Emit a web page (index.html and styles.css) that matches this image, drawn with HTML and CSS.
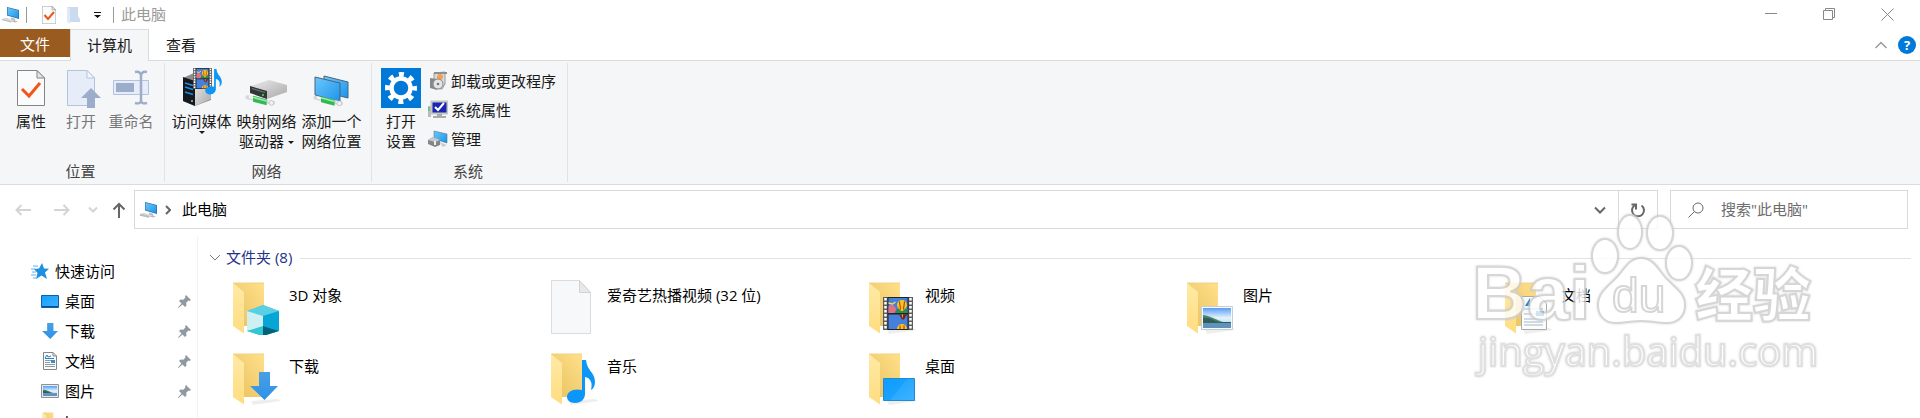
FILE: index.html
```html
<!DOCTYPE html>
<html lang="zh-CN">
  <head>
    <meta charset="UTF-8" />
    <meta name="viewport" content="width=device-width, initial-scale=1" />
    <title>此电脑</title>
    <link rel="stylesheet" href="styles.css">
  </head>
  <body>
    <!-- Shared icons -->
    <svg class="defs" width="0" height="0" aria-hidden="true">
      <defs>
        <linearGradient id="gBack" x1="0" y1="1" x2="1" y2="0">
          <stop offset="0" stop-color="#e8c05e" />
          <stop offset="1" stop-color="#ffe08a" />
        </linearGradient>
        <linearGradient id="gFront" x1="0" y1="0" x2="0" y2="1">
          <stop offset="0" stop-color="#ffeaa6" />
          <stop offset="1" stop-color="#ffdc80" />
        </linearGradient>
        <linearGradient id="gBlue" x1="0" y1="0" x2="1" y2="1">
          <stop offset="0" stop-color="#14a0ff" />
          <stop offset="1" stop-color="#3fb2ff" />
        </linearGradient>
        <linearGradient id="gScreen" x1="0" y1="0" x2="1" y2="1">
          <stop offset="0" stop-color="#6cc8fb" />
          <stop offset="1" stop-color="#1c93ea" />
        </linearGradient>
        <linearGradient id="gArrow" x1="0" y1="0" x2="0" y2="1">
          <stop offset="0" stop-color="#4a9fe6" />
          <stop offset="1" stop-color="#2b92e8" />
        </linearGradient>
        <linearGradient id="gSky" x1="0" y1="0" x2="0" y2="1">
          <stop offset="0" stop-color="#5b9cf5" />
          <stop offset="0.5" stop-color="#e4f4fd" />
          <stop offset="1" stop-color="#9cc8e4" />
        </linearGradient>
        <linearGradient id="gMetal" x1="0" y1="0" x2="1" y2="1">
          <stop offset="0" stop-color="#ececec" />
          <stop offset="1" stop-color="#a9a9a9" />
        </linearGradient>
      </defs>
      <symbol id="folder" viewBox="0 0 52 56">
        <path d="M22 55L50 51 46 49 20 51z" fill="#eee" />
        <path d="M2 4h31v43H2z" fill="url(#gBack)" />
        <path d="M2 4h31" stroke="#f0d282" />
        <path d="M13 47h20v3l-18 1z" fill="#fff" opacity="0.6" />
        <path d="M2 4l11 9v41.500L2 47z" fill="url(#gFront)" />
      </symbol>
      <symbol id="pc" viewBox="0 0 20 18">
        <path d="M7 1l12 3v9L7 9.500z" fill="#2c6f9e" />
        <path d="M7.600 1.800L18.400 4.500v7.600L7.600 9z" fill="url(#gScreen)" />
        <path d="M11 11.500l4 1.200v1.800l3 .8-3 1.200-5-1.500 1-.8z" fill="#b8bcc0" />
        <path d="M1 13.500l4.500-1.800 9 2.600-3.500 2.200z" fill="#d5dade" />
        <path d="M2 13.700l9 2.200" stroke="#b6bcc2" />
      </symbol>
      <symbol id="net" viewBox="0 0 40 14">
        <path d="M3 3l32 7" stroke="#d4d8d8" stroke-width="5" stroke-linecap="round" />
        <path d="M5 2.500l6 1.300M29 8l5 1" stroke="#f6f6f6" stroke-width="2.500" />
        <path d="M10 1l17 4.500v7.500L10 8.500z" fill="#34b856" />
        <path d="M10 3l17 4.500" stroke="#9aecaa" stroke-width="2" />
        <circle cx="33" cy="10" r="3" fill="#f2f2f2" stroke="#aaa" stroke-width="0.700" />
      </symbol>
      <symbol id="film" viewBox="0 0 30 33">
        <path d="M0 0h30v33H0z" fill="#5c5c5c" />
        <path d="M2.500 1v32M27.500 1v32" stroke="#fff" stroke-width="2.500" stroke-dasharray="2.500 1.500" />
        <path d="M4.500 0h21v33h-21z" fill="#222" />
        <path d="M5.500 1h19v15h-19zM5.500 17.500h19V32h-19z" fill="#4480dc" />
        <path d="M5.500 12h19v4h-19z" fill="#2c8c4c" />
        <path d="M5.500 9l4-2 4 5-2 4h-6z" fill="#e2708a" />
        <path d="M5.500 6l4 1 3-2" stroke="#f5d95c" stroke-width="1.500" fill="none" />
        <path d="M14 8a5 5 0 0110 0c0 3-3 4-4 6h-2c-1-2-4-3-4-6z" fill="#f4c51d" />
        <path d="M16.500 4.500l1 8M21.500 4.500l-1 8" stroke="#c8201c" />
        <path d="M16 17.500h8l-3 5h-2z" fill="#7c2020" />
        <path d="M18.500 17.500h1.500v4z" fill="#e8c020" />
        <path d="M14 32a5 5 0 0110 0z" fill="#f4c51d" />
        <path d="M17 28.500V32M21 28.500V32" stroke="#c8201c" />
      </symbol>
      <symbol id="note" viewBox="0 0 28 44">
        <path d="M15 0h4c1 11 9 12 9 22 0 4-2 7-4 8 2-8-1-12-6-13v17c0 5-4 9-10 9-5 0-8-3-8-6 0-5 6-9 15-7z" fill="#0c97f8" />
      </symbol>
      <symbol id="down" viewBox="0 0 28 30">
        <path d="M9 1h11v14h8L14.500 29 0 15h9z" fill="url(#gArrow)" />
      </symbol>
      <symbol id="photo" viewBox="0 0 32 24">
        <path d="M.5.5h31v23H.5z" fill="#f8fafc" stroke="#c3d0da" />
        <path d="M2 2h28v20H2z" fill="url(#gSky)" />
        <path d="M2 9c8 1 14 5 20 7H2z" fill="#4d8468" />
        <path d="M2 12c6-1 12 3 16 4h12v1H2z" fill="#2e5e58" />
        <path d="M2 17h28v5H2z" fill="#5f92bd" />
      </symbol>
      <symbol id="pin" viewBox="0 0 13 13">
        <path d="M8 0l5 5-1.500 1-1-.5-2.300 2.300.3 2.700L7 12 4.500 9.500.5 13 0 12.500l3.500-4L1 6l1.500-1.500 2.700.3L7.500 2.500 7 1.500z" fill="#8f999f" />
      </symbol>
      <symbol id="sheet" viewBox="0 0 28 36">
        <path d="M.5.500H20l7.500 7.500v27.500H.5z" fill="#fbfbfb" stroke="#858585" />
        <path d="M20 .5V8h7.500z" fill="#e6e6e6" stroke="#858585" />
      </symbol>
    </svg>

    <header class="titlebar">
      <svg class="title-pc" width="20" height="18"><use href="#pc" /></svg>
      <span class="bar"></span>
      <button class="quick" aria-label="属性">
        <svg width="14" height="18" viewBox="0 0 28 36"><use href="#sheet" width="28" height="36" /><path d="M5 18l7 8L24 12" stroke="#e8571b" stroke-width="4" fill="none" /></svg>
      </button>
      <button class="quick" aria-label="新建文件夹">
        <svg width="13" height="18" viewBox="0 0 13 18"><path d="M0 1h11v9l2 3v3H3z" fill="#ccdaf0" /><path d="M0 1l3 2v15l-3-2z" fill="#dfe9f8" /></svg>
      </button>
      <button class="quick" aria-label="自定义快速访问工具栏">
        <svg width="7" height="6" viewBox="0 0 7 6"><path d="M0 0h7v1H0zM0 3h7L3.500 6z" fill="#111" /></svg>
      </button>
      <span class="bar"></span>
      <h1>此电脑</h1>
      <div class="window-buttons">
        <button aria-label="最小化"><svg width="13" height="13"><path d="M0 5.500h12" stroke="#888" /></svg></button>
        <button aria-label="还原"><svg width="13" height="13"><path d="M.5 2.500h9v9h-9zM2.500 2.500v-2h9v9h-2" stroke="#888" fill="none" /></svg></button>
        <button aria-label="关闭"><svg width="13" height="13"><path d="M.5.5l12 12M12.500.500l-12 12" stroke="#888" /></svg></button>
      </div>
    </header>

    <nav class="tabs">
      <button class="tab file">文件</button>
      <button class="tab active">计算机</button>
      <button class="tab">查看</button>
      <div class="tabs-right">
        <button aria-label="折叠功能区"><svg width="12" height="8"><path d="M.5 7L6 1.500 11.500 7" stroke="#999" stroke-width="1.500" fill="none" /></svg></button>
        <button class="help" aria-label="帮助">?</button>
      </div>
    </nav>

    <section class="ribbon">
      <div class="group">
        <div class="tools narrow">
          <button class="tool">
            <svg width="40" height="40"><use href="#sheet" x="6" y="2" width="28" height="36" /><path d="M11 21l7 7 11-13" stroke="#f0561a" stroke-width="3" fill="none" /></svg>
            <span>属性</span>
          </button>
          <button class="tool" disabled>
            <svg width="40" height="40"><path d="M6.500 2.500H26l7.500 7.500v27.500h-27z" fill="#e6edf9" stroke="#b3c3de" /><path d="M26 2.500V10h7.500z" fill="#f5f8fd" stroke="#b3c3de" /><path d="M20 30l10-10 10 10h-6v10h-8V30z" fill="#9badcb" /></svg>
            <span>打开</span>
          </button>
          <button class="tool" disabled>
            <svg width="40" height="40"><path d="M2.500 12.500h35v14h-35z" fill="#e6edf9" stroke="#b3c3de" /><path d="M5 15h18v9H5z" fill="#9badcb" /><path d="M24 4c5-1 6 2 6 4v24c0 3-2 4-6 3M36 4c-5-1-6 2-6 4v24c0 3 2 4 6 3" stroke="#9badcb" stroke-width="2.500" fill="none" /></svg>
            <span>重命名</span>
          </button>
        </div>
        <h2>位置</h2>
      </div>

      <div class="group">
        <div class="tools wide">
          <button class="tool">
            <svg width="40" height="40">
              <path d="M1 10L14 4l15 5v23L13 38 1 33z" fill="#8b8d92" />
              <path d="M1 9l12 4v25L1 33z" fill="#17191c" />
              <path d="M13 13l16-4v22l-16 7z" fill="url(#gMetal)" />
              <path d="M3 15l8 2.500M3 19l8 2.500M3 24l8 2.500" stroke="#1c8de8" stroke-width="1.500" />
              <circle cx="10" cy="33" r="1" fill="#6cd0ff" />
              <use href="#film" x="11" y="0" width="19" height="21" />
              <use href="#note" x="23" y="1" width="17" height="26" />
            </svg>
            <span>访问媒体</span>
            <svg class="caret" width="6" height="3"><path d="M0 0h6L3 3z" /></svg>
          </button>
          <button class="tool">
            <svg width="44" height="40"><path d="M5 18l19-6 18 5v7l-20 7-17-6z" fill="url(#gMetal)" /><path d="M5 18l17 5v8L5 25z" fill="#34373a" /><path d="M7 20.500l13 4" stroke="#777" /><circle cx="18" cy="27" r="1" fill="#42ee42" /><use href="#net" x="0" y="26" width="32" height="13" /></svg>
            <span>映射网络<br />驱动器<svg class="caret inline" width="6" height="3"><path d="M0 0h6L3 3z" /></svg></span>
          </button>
          <button class="tool">
            <svg width="40" height="40"><path d="M12 8l24 6v16l-24-6z" fill="url(#gScreen)" stroke="#47647c" /><path d="M3 9l25 6v19L3 27z" fill="url(#gScreen)" stroke="#47647c" /><use href="#net" x="1" y="27" width="32" height="12" /></svg>
            <span>添加一个<br />网络位置</span>
          </button>
        </div>
        <h2>网络</h2>
      </div>

      <div class="group">
        <div class="tools">
          <button class="tool">
            <svg width="40" height="40"><path d="M0 0h40v40H0z" fill="#0078d7" /><circle cx="20" cy="20" r="9.500" stroke="#fff" stroke-width="4.500" fill="none" /><circle cx="20" cy="20" r="13.500" stroke="#fff" stroke-width="5" stroke-dasharray="5 5.600" stroke-dashoffset="2.500" fill="none" /></svg>
            <span>打开<br />设置</span>
          </button>
          <div class="tool-list">
            <button>
              <svg width="20" height="20"><path d="M6 2l11-1v12l-3 5-8-1z" fill="#d8dadc" stroke="#999" /><path d="M6 1h13v2H6z" fill="#8a8f94" /><circle cx="12" cy="6" r="3" fill="#f0a050" /><path d="M2 7l7 1v11l-7-2z" fill="#85898d" /><circle cx="10" cy="13" r="5" fill="#e3e6e8" stroke="#888" /><circle cx="10" cy="13" r="1.300" fill="#777" /></svg>
              <span>卸载或更改程序</span>
            </button>
            <button>
              <svg width="20" height="20"><path d="M0 6h3v11H0z" fill="#bbb" /><path d="M1 7v4" stroke="#3c4" /><path d="M3.500 1.500h16v12h-16z" fill="#1b24b4" stroke="#c4c6c2" stroke-width="2" /><path d="M7 7l3 3 6-7" stroke="#fff" stroke-width="2" fill="none" /><path d="M9 14h5v2h4v2H5v-2h4z" fill="#aaa" /></svg>
              <span>系统属性</span>
            </button>
            <button>
              <svg width="20" height="20"><path d="M6 2l13 3v9L6 10z" fill="url(#gScreen)" stroke="#47647c" stroke-width="0.500" /><path d="M11 13l8 3-4 2z" fill="#ccc" /><path d="M0 11l5-3 7 3v5l-5 2-7-3z" fill="#80868a" /><path d="M0 11l5-3 7 3-5 2z" fill="#c6cacc" /><path d="M7 12v4" stroke="#eee" stroke-width="2" /></svg>
              <span>管理</span>
            </button>
          </div>
        </div>
        <h2>系统</h2>
      </div>
    </section>

    <div class="location">
      <div class="nav-buttons">
        <button aria-label="后退" disabled><svg width="16" height="12"><path d="M16 6H1.500M6.500 1l-5 5 5 5" /></svg></button>
        <button aria-label="前进" disabled><svg width="16" height="12"><path d="M0 6h14.500M9.500 1l5 5-5 5" /></svg></button>
        <button class="recent" aria-label="最近浏览的位置" disabled><svg width="10" height="12"><path d="M1 3.500l4 4 4-4" /></svg></button>
        <button class="up" aria-label="上移"><svg width="14" height="16"><path d="M7 16V2M1.500 7.500L7 2l5.500 5.500" /></svg></button>
      </div>
      <div class="address">
        <svg width="20" height="18"><use href="#pc" /></svg>
        <svg class="crumb" width="6" height="10"><path d="M1 1l4 4-4 4" /></svg>
        <a href="#">此电脑</a>
        <button aria-label="展开地址"><svg width="12" height="8"><path d="M1 1.500l5 5 5-5" /></svg></button>
        <button class="refresh" aria-label="刷新"><svg width="16" height="16"><path d="M4.500 3.500a6 6 0 107 0M1.500 2.500h4.500v5" /></svg></button>
      </div>
      <label class="search">
        <svg width="16" height="16"><circle cx="10" cy="6" r="5" /><path d="M6.500 9.500L.5 15.500" /></svg>
        <input type="text" placeholder='搜索"此电脑"' aria-label="搜索" />
      </label>
    </div>

    <div class="content">
      <aside class="sidebar">
        <a class="root" href="#">
          <svg width="18" height="18"><path d="M11 1l2 5.500 5 .3-4 3.700 2 6.500-5.500-3.500L5 17l1.500-6L3 7l5-.5z" fill="#1e90e0" /><path d="M2 4h5M0 7h4M1 10h4M0 13h5M2 16h3" stroke="#5cb4ee" /></svg>
          <span>快速访问</span>
        </a>
        <a href="#">
          <svg width="18" height="18"><path d="M.5 3.500h17v12H.5z" fill="url(#gBlue)" stroke="#0b62a8" /><path d="M1 14.500h16" stroke="#0b4f8a" /></svg>
          <span>桌面</span>
          <svg class="pin" width="13" height="13"><use href="#pin" /></svg>
        </a>
        <a href="#">
          <svg width="18" height="18"><use href="#down" x="1" y="0" width="16" height="18" /></svg>
          <span>下载</span>
          <svg class="pin" width="13" height="13"><use href="#pin" /></svg>
        </a>
        <a href="#">
          <svg width="18" height="18"><path d="M2.500.5H12l3.500 3.500v13.500h-13z" fill="#fbfbfb" stroke="#858585" /><path d="M12 .5V4h3.500" fill="none" stroke="#858585" /><path d="M4 8.500h6M4 10.500h5M4 12.500h10M4 14.500h10" stroke="#8b9aa4" /><path d="M4 6l2-3 1 2 3-1M4 6.500h9" stroke="#2583c4" fill="none" /><path d="M10 8h4v3h-4z" fill="#3b8dbd" /></svg>
          <span>文档</span>
          <svg class="pin" width="13" height="13"><use href="#pin" /></svg>
        </a>
        <a href="#">
          <svg width="18" height="18"><path d="M.5 2.500h17v13H.5z" fill="#fff" stroke="#8b9298" /><use href="#photo" x="1" y="3" width="16" height="12" /></svg>
          <span>图片</span>
          <svg class="pin" width="13" height="13"><use href="#pin" /></svg>
        </a>
        <a href="#">
          <svg width="18" height="18"><use href="#folder" x="1" y="-1" width="18" height="20" /></svg>
          <span>h</span>
        </a>
      </aside>

      <main>
        <div class="section-title">
          <svg width="12" height="8"><path d="M1 1l5 5 5-5" /></svg>
          <h2>文件夹 (8)</h2>
        </div>
        <div class="items">
          <a href="#">
            <svg width="52" height="56"><use href="#folder" /><path d="M16 32l16-6 16 6v20l-16 5-16-5z" fill="#39c9d8" /><path d="M16 32l16-6 16 6-16 5z" fill="#58cfe2" /><path d="M16 32l16 5v12l-16 3z" fill="#cff0f2" /><path d="M32 37l16-5v20l-16-5z" fill="#05a5d6" /><path d="M32 47l16 5-16 5z" fill="#04617c" /><path d="M32 47v10l-16-5z" fill="#33c6d5" /></svg>
            <span>3D 对象</span>
          </a>
          <a href="#">
            <svg width="52" height="56"><path d="M2.500 1.500h28l11 12v41h-39z" fill="#f7f8f9" stroke="#dcdcdc" /><path d="M30.500 1.500v12h11z" fill="#e8e8e8" stroke="#d2d2d2" /></svg>
            <span>爱奇艺热播视频 (32 位)</span>
          </a>
          <a href="#">
            <svg width="52" height="56"><use href="#folder" /><use href="#film" x="16" y="18" width="30" height="33" /></svg>
            <span>视频</span>
          </a>
          <a href="#">
            <svg width="52" height="56"><use href="#folder" /><use href="#photo" x="16" y="27" width="32" height="24" /></svg>
            <span>图片</span>
          </a>
          <a href="#">
            <svg width="52" height="56"><use href="#folder" /><path d="M18.500 17.500h18l7 7v26h-25z" fill="#fafcfd" stroke="#aaa" /><path d="M21 30h19M21 35h12M21 40h19M21 43h19M21 46h19" stroke="#a6b8c4" /><path d="M22 27l5-8v8M33 32h8v5h-8z" fill="#1a78c2" /></svg>
            <span>文档</span>
          </a>
          <a href="#">
            <svg width="52" height="56"><use href="#folder" /><use href="#down" x="19" y="21" width="28" height="30" /></svg>
            <span>下载</span>
          </a>
          <a href="#">
            <svg width="52" height="56"><use href="#folder" /><use href="#note" x="18" y="10" width="28" height="44" /></svg>
            <span>音乐</span>
          </a>
          <a href="#">
            <svg width="52" height="56"><use href="#folder" /><path d="M16.500 28.500h31v22h-31z" fill="url(#gBlue)" stroke="#2089d2" /><path d="M17 29h23L23 50h-6z" fill="#0799ff" opacity="0.5" /></svg>
            <span>桌面</span>
          </a>
        </div>
      </main>
    </div>

    <!-- Watermark over the page -->
    <svg class="watermark" width="360" height="180" viewBox="0 0 360 180">
      <text class="mark-heavy" x="2" y="114">Bai</text>
      <ellipse cx="135" cy="51" rx="13" ry="17" />
      <ellipse cx="160" cy="27" rx="12" ry="17" />
      <ellipse cx="190" cy="28" rx="13" ry="17" />
      <ellipse cx="209" cy="58" rx="13" ry="17" />
      <path d="M171 53c14 0 18 14 27 22 9 9 17 14 17 25 0 12-8 18-18 18-9 0-16-2-26-2s-16 2-25 2c-11 0-18-7-18-18 0-12 9-18 17-26 9-8 13-21 26-21z" />
      <text class="mark-du" x="142" y="107">du</text>
      <text class="mark-cjk" x="225" y="111">经验</text>
      <text class="mark-url" x="8" y="161">jingyan.baidu.com</text>
    </svg>
  </body>
</html>
```
FILE: styles.css
```css
* {
  box-sizing: border-box;
}

body {
  margin: 0;
  height: 100vh;
  overflow: hidden;
  position: relative;
  display: flex;
  flex-direction: column;
  background: #fff;
  color: #1a1a1a;
  font: 15px/20px "Open Sans", "Noto Sans CJK SC", sans-serif;
}

svg {
  display: block;
  flex: none;
}

.defs {
  position: absolute;
}

h1,
h2 {
  margin: 0;
  font-size: 15px;
  font-weight: normal;
}

a {
  color: #000;
  text-decoration: none;
}

button {
  border: none;
  background: none;
  padding: 0;
  color: inherit;
  font: inherit;
  white-space: nowrap;
  display: flex;
  align-items: center;
  justify-content: center;
}

/* Title bar */
.titlebar {
  display: flex;
  align-items: center;
  height: 29px;
}

.titlebar h1 {
  color: #999;
  margin-left: 7px;
  padding-bottom: 2px;
}

.bar {
  width: 1px;
  height: 16px;
  background: #999;
  margin-left: 6px;
}

.quick {
  width: 24px;
}

.bar + .quick {
  margin-left: 10px;
}

.quick + .bar {
  margin-left: 4px;
}

.window-buttons {
  display: flex;
  align-self: stretch;
  margin-left: auto;
  padding-right: 4px;
}

.window-buttons button {
  width: 58px;
}

/* Tabs */
.tabs {
  display: flex;
  height: 32px;
  border-bottom: 1px solid #dadbdc;
}

.tab {
  height: 32px;
  padding: 0 16px 2px;
  border: 1px solid transparent;
  border-bottom: none;
}

.tab.file {
  height: 28px;
  width: 70px;
  padding: 0;
  color: #fff;
  background: #9a5b20;
}

.tab.active {
  width: 79px;
  background: #f5f6f7;
  border-color: #dadbdc;
}

.tabs-right {
  display: flex;
  align-items: center;
  gap: 11px;
  margin-left: auto;
  padding-right: 4px;
}

.help {
  width: 18px;
  height: 18px;
  border-radius: 50%;
  background: #0078d7;
  color: #fff;
  font-size: 13px;
  font-weight: bold;
}

/* Ribbon */
.ribbon {
  display: flex;
  background: #f5f6f7;
  border-bottom: 1px solid #dadbdc;
  padding: 2px 0;
}

.group {
  border-right: 1px solid #e2e3e4;
  padding: 5px 7px 1px 4px;
}

.group h2 {
  margin-top: 10px;
  text-align: center;
  color: #444;
}

.tools {
  display: flex;
  height: 83px;
}

.tool {
  width: 50px;
  flex-direction: column;
  justify-content: flex-start;
}

.tool > svg:first-child {
  margin-bottom: 3px;
}

.wide .tool {
  width: 65px;
}

.tool:disabled {
  color: #777;
}

.narrow {
  width: 153px;
  padding-left: 2px;
}

.caret {
  fill: #1a1a1a;
}

.caret.inline {
  display: inline-block;
  vertical-align: middle;
  margin-left: 4px;
}

.tool-list {
  display: flex;
  flex-direction: column;
  align-items: flex-start;
  gap: 9px;
  padding: 3px 4px 0 2px;
}

.tool-list button {
  gap: 3px;
}

/* Address row */
.location {
  display: flex;
  align-items: center;
  gap: 12px;
  padding: 5px 12px 7px 0;
}

.location svg {
  fill: none;
  stroke: #666;
  stroke-width: 2;
}

.nav-buttons {
  display: flex;
  width: 122px;
  padding-left: 15px;
  gap: 23px;
}

.nav-buttons button:disabled svg {
  stroke: #d4d4d4;
}

.nav-buttons .recent {
  margin-right: -9px;
  margin-left: -5px;
}

.address {
  flex: 1;
  display: flex;
  align-items: center;
  height: 39px;
  padding-left: 3px;
  border: 1px solid #d9d9d9;
}

.address use {
  stroke: none;
}

.address a,
.search input {
  padding: 0 0 2px;
}

.address .crumb {
  margin: 0 11px 0 7px;
}

.address button {
  width: 36px;
  height: 37px;
  margin-left: auto;
}

.address .refresh {
  margin-left: 0;
  width: 39px;
  border-left: 1px solid #d9d9d9;
}

.search {
  display: flex;
  align-items: center;
  gap: 17px;
  width: 238px;
  height: 39px;
  padding-left: 17px;
  border: 1px solid #d9d9d9;
}

.search svg {
  stroke-width: 1;
}

.search input {
  flex: 1;
  min-width: 0;
  border: none;
  outline: none;
  font: inherit;
}

.search input::placeholder {
  color: #6d6d6d;
}

/* Navigation pane */
.content {
  flex: 1;
  min-height: 0;
  display: flex;
}

.sidebar {
  width: 198px;
  padding-top: 20px;
  border-right: 1px solid #f3f3f3;
}

.sidebar a {
  display: flex;
  align-items: center;
  gap: 6px;
  height: 30px;
  padding: 0 6px 0 41px;
}

.sidebar .root {
  padding-left: 31px;
}

.pin {
  margin-left: auto;
}

/* File list */
main {
  flex: 1;
  padding: 10px 9px 0 11px;
}

.section-title {
  display: flex;
  align-items: center;
  height: 24px;
}

.section-title svg {
  fill: none;
  stroke: #777;
}

.section-title h2 {
  color: #1e3287;
  margin: 0 8px 0 5px;
  padding-bottom: 2px;
}

.section-title::after {
  content: "";
  flex: 1;
  height: 1px;
  background: #e2e2e2;
}

.items {
  display: grid;
  grid-template-columns: repeat(auto-fill, 318px);
  grid-auto-rows: 71px;
  padding: 9px 0 0 22px;
}

.items a {
  display: flex;
  align-items: flex-start;
  gap: 6px;
}

.items span {
  margin-top: 6px;
}

/* Watermark */
.watermark {
  position: absolute;
  top: 205px;
  right: 90px;
  opacity: 0.8;
  fill: #fff;
  stroke: #ccc;
  stroke-width: 2;
  pointer-events: none;
  filter: drop-shadow(0 0 1px #ccc);
}

.mark-heavy {
  font: bold 76px "Liberation Sans", sans-serif;
}

.mark-du {
  font: 48px "Liberation Sans", sans-serif;
}

.mark-cjk {
  font: 900 58px "Noto Sans CJK SC", sans-serif;
}

.mark-url {
  font: 40px "Open Sans", sans-serif;
  stroke: #d8d8d8;
}
```
